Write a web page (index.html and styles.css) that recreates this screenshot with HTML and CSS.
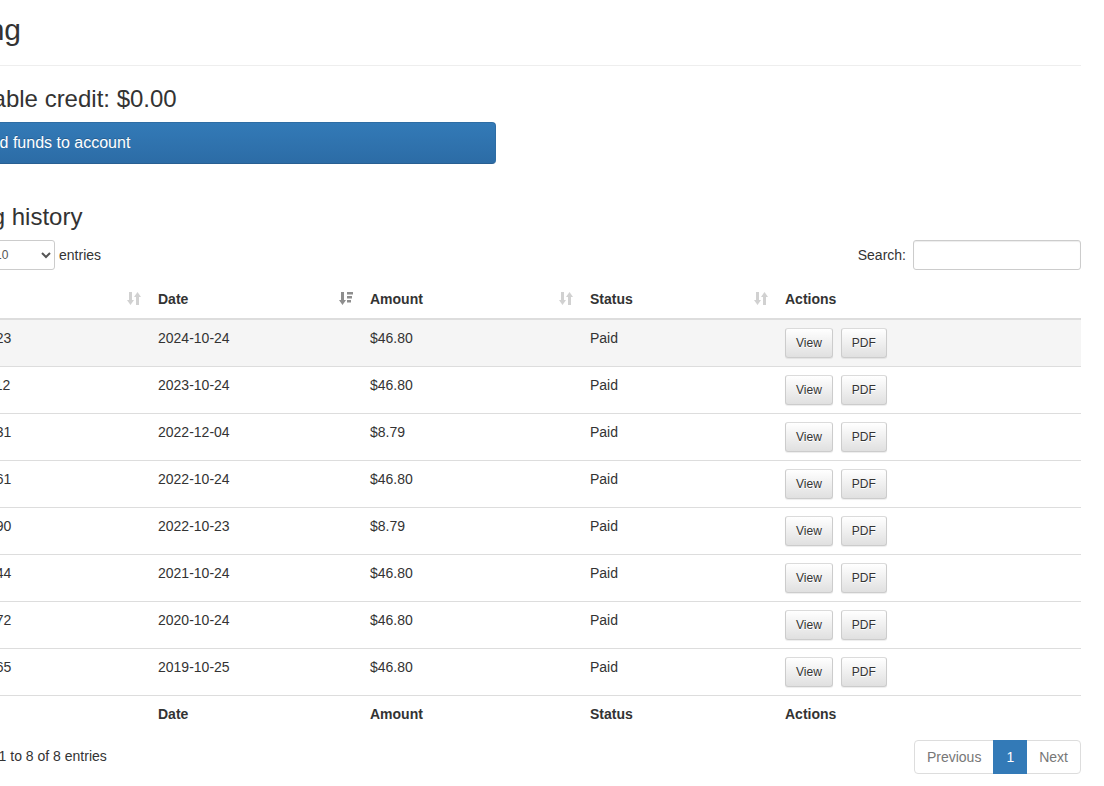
FILE: index.html
```html
<!DOCTYPE html>
<html lang="en">
<head>
<meta charset="utf-8">
<title>Billing</title>
<link rel="stylesheet" href="styles.css">
</head>
<body>
<div class="container">
  <div class="page-header"><h1>Billing</h1></div>
  <div class="half">
    <h3 class="credit">Available credit: $0.00</h3>
    <button class="btn-add" type="button">Add funds to account</button>
  </div>
  <h3 class="history">Billing history</h3>
  <div class="dt-top">
    <label class="dt-length">Show <select class="sel"><option>10</option><option>25</option><option>50</option><option>100</option></select> entries</label>
    <label class="dt-search">Search: <input class="search-input" type="search"></label>
  </div>
  <table class="dt">
    <colgroup>
      <col class="c1"><col class="c2"><col class="c3"><col class="c4"><col class="c5">
    </colgroup>
    <thead>
      <tr>
        <th><div class="th-in"><span>ID</span><svg class="sort" viewBox="0 0 14 13" width="14" height="13"><path d="M2 0h3v8h2l-3.5 5L0 8h2z"/><path d="M9 13h3V5h2L10.5 0 7 5h2z"/></svg></div></th>
        <th><div class="th-in"><span>Date</span><svg class="sort sorted" viewBox="0 0 14 13" width="14" height="13"><path d="M2 0h3v8h2l-3.5 5L0 8h2z"/><rect x="8" y="0" width="6" height="2.5"/><rect x="8" y="4" width="5" height="2.5"/><rect x="8" y="8" width="4" height="2.5"/></svg></div></th>
        <th><div class="th-in"><span>Amount</span><svg class="sort" viewBox="0 0 14 13" width="14" height="13"><path d="M2 0h3v8h2l-3.5 5L0 8h2z"/><path d="M9 13h3V5h2L10.5 0 7 5h2z"/></svg></div></th>
        <th><div class="th-in"><span>Status</span><svg class="sort" viewBox="0 0 14 13" width="14" height="13"><path d="M2 0h3v8h2l-3.5 5L0 8h2z"/><path d="M9 13h3V5h2L10.5 0 7 5h2z"/></svg></div></th>
        <th>Actions</th>
      </tr>
    </thead>
    <tbody>
      <tr class="hl"><td>10048823</td><td>2024-10-24</td><td>$46.80</td><td>Paid</td><td><div class="acts"><button class="btn-sm" type="button">View</button><button class="btn-sm" type="button">PDF</button></div></td></tr>
      <tr><td>10037112</td><td>2023-10-24</td><td>$46.80</td><td>Paid</td><td><div class="acts"><button class="btn-sm" type="button">View</button><button class="btn-sm" type="button">PDF</button></div></td></tr>
      <tr><td>10029831</td><td>2022-12-04</td><td>$8.79</td><td>Paid</td><td><div class="acts"><button class="btn-sm" type="button">View</button><button class="btn-sm" type="button">PDF</button></div></td></tr>
      <tr><td>10026561</td><td>2022-10-24</td><td>$46.80</td><td>Paid</td><td><div class="acts"><button class="btn-sm" type="button">View</button><button class="btn-sm" type="button">PDF</button></div></td></tr>
      <tr><td>10026490</td><td>2022-10-23</td><td>$8.79</td><td>Paid</td><td><div class="acts"><button class="btn-sm" type="button">View</button><button class="btn-sm" type="button">PDF</button></div></td></tr>
      <tr><td>10015744</td><td>2021-10-24</td><td>$46.80</td><td>Paid</td><td><div class="acts"><button class="btn-sm" type="button">View</button><button class="btn-sm" type="button">PDF</button></div></td></tr>
      <tr><td>10008672</td><td>2020-10-24</td><td>$46.80</td><td>Paid</td><td><div class="acts"><button class="btn-sm" type="button">View</button><button class="btn-sm" type="button">PDF</button></div></td></tr>
      <tr><td>10001965</td><td>2019-10-25</td><td>$46.80</td><td>Paid</td><td><div class="acts"><button class="btn-sm" type="button">View</button><button class="btn-sm" type="button">PDF</button></div></td></tr>
    </tbody>
    <tfoot>
      <tr><th>ID</th><th>Date</th><th>Amount</th><th>Status</th><th>Actions</th></tr>
    </tfoot>
  </table>
  <div class="dt-bottom">
    <div class="dt-info">Showing 1 to 8 of 8 entries</div>
    <ul class="pagination">
      <li class="disabled"><a>Previous</a></li>
      <li class="active"><a>1</a></li>
      <li class="disabled"><a>Next</a></li>
    </ul>
  </div>
</div>
</body>
</html>
```

FILE: styles.css
```css
* { box-sizing: border-box; }
html, body { margin: 0; padding: 0; background: #fff; }
body {
  font-family: "Liberation Sans", Arial, Helvetica, sans-serif;
  font-size: 14px;
  line-height: 20px;
  color: #333;
  overflow: hidden;
}
.container {
  width: 1140px;
  margin-left: -59px;
  padding-top: 13px;
}
.page-header {
  padding-bottom: 19px;
  border-bottom: 1px solid #eee;
}
h1 {
  margin: 0;
  font-size: 30px;
  line-height: 33px;
  font-weight: 500;
}
.half { width: 555px; }
h3 {
  margin: 0;
  font-size: 24px;
  line-height: 26px;
  font-weight: 500;
}
.credit { margin-top: 20px; margin-bottom: 10px; }
.btn-add {
  display: block;
  width: 100%;
  height: 42px;
  padding: 0 0 0 38px;
  text-align: left;
  font-family: inherit;
  font-size: 16px;
  color: #fff;
  background: linear-gradient(to bottom, #337ab7 0, #2c6ca6 100%);
  border: 1px solid #2e6da4;
  border-bottom-color: #285f92;
  border-radius: 4px;
  text-shadow: 0 -1px 0 rgba(0,0,0,.2);
}
.history { margin-top: 40px; margin-bottom: 10px; }
.dt-top {
  display: flex;
  justify-content: space-between;
  align-items: center;
  height: 30px;
}
.dt-top label { font-weight: normal; display: flex; align-items: center; white-space: nowrap; }
.sel {
  width: 75px;
  height: 30px;
  margin: 0 4px;
  padding: 5px 6px 5px 10px;
  font-family: inherit;
  font-size: 12px;
  color: #555;
  background: #fff;
  border: 1px solid #ccc;
  border-radius: 3px;
}
.search-input {
  width: 168px;
  height: 30px;
  margin-left: 7px;
  padding: 5px 10px;
  font-family: inherit;
  font-size: 12px;
  border: 1px solid #ccc;
  border-radius: 3px;
  box-shadow: inset 0 1px 1px rgba(0,0,0,.075);
}
.dt {
  width: 1140px;
  table-layout: fixed;
  border-collapse: collapse;
  border-spacing: 0;
  margin-top: 11px;
}
.c1 { width: 209px; }
.c2 { width: 212px; }
.c3 { width: 220px; }
.c4 { width: 195px; }
.c5 { width: 304px; }
.dt th, .dt td {
  padding: 8px;
  text-align: left;
  vertical-align: top;
  line-height: 20px;
}
.dt th { font-weight: bold; }
.dt thead th { border-bottom: 2px solid #ddd; padding-bottom: 9px; }
.dt tbody td { border-top: 1px solid #ddd; }
.dt tbody tr:first-child td { border-top: 0; }
.dt tfoot th { border-top: 1px solid #ddd; }
.dt tr.hl td { background: #f5f5f5; }
.th-in {
  display: flex;
  justify-content: space-between;
  align-items: flex-start;
}
.sort { fill: #333; opacity: .22; margin-top: 3px; margin-right: 1px; }
.sort.sorted { opacity: .55; }
.acts { display: flex; gap: 8px; }
.btn-sm {
  height: 30px;
  padding: 5px 10px;
  font-family: inherit;
  font-size: 12px;
  line-height: 18px;
  color: #333;
  background: linear-gradient(to bottom, #fff 0, #e0e0e0 100%);
  border: 1px solid #ccc;
  border-top-color: #dbdbdb;
  border-radius: 3px;
  text-shadow: 0 1px 0 #fff;
  box-shadow: inset 0 1px 0 rgba(255,255,255,.15), 0 1px 1px rgba(0,0,0,.075);
}
.dt-bottom {
  display: flex;
  justify-content: space-between;
  align-items: flex-start;
  margin-top: 6px;
}
.dt-info { padding-top: 8px; white-space: nowrap; }
.pagination {
  display: flex;
  list-style: none;
  margin: 2px 0;
  padding: 0;
}
.pagination li a {
  display: block;
  padding: 6px 12px;
  line-height: 20px;
  border: 1px solid #ddd;
  margin-left: -1px;
  color: #777;
  background: #fff;
}
.pagination li:first-child a { margin-left: 0; border-radius: 4px 0 0 4px; }
.pagination li:last-child a { border-radius: 0 4px 4px 0; }
.pagination li.active a {
  background: #337ab7;
  border-color: #337ab7;
  color: #fff;
  position: relative;
  z-index: 1;
}
```
